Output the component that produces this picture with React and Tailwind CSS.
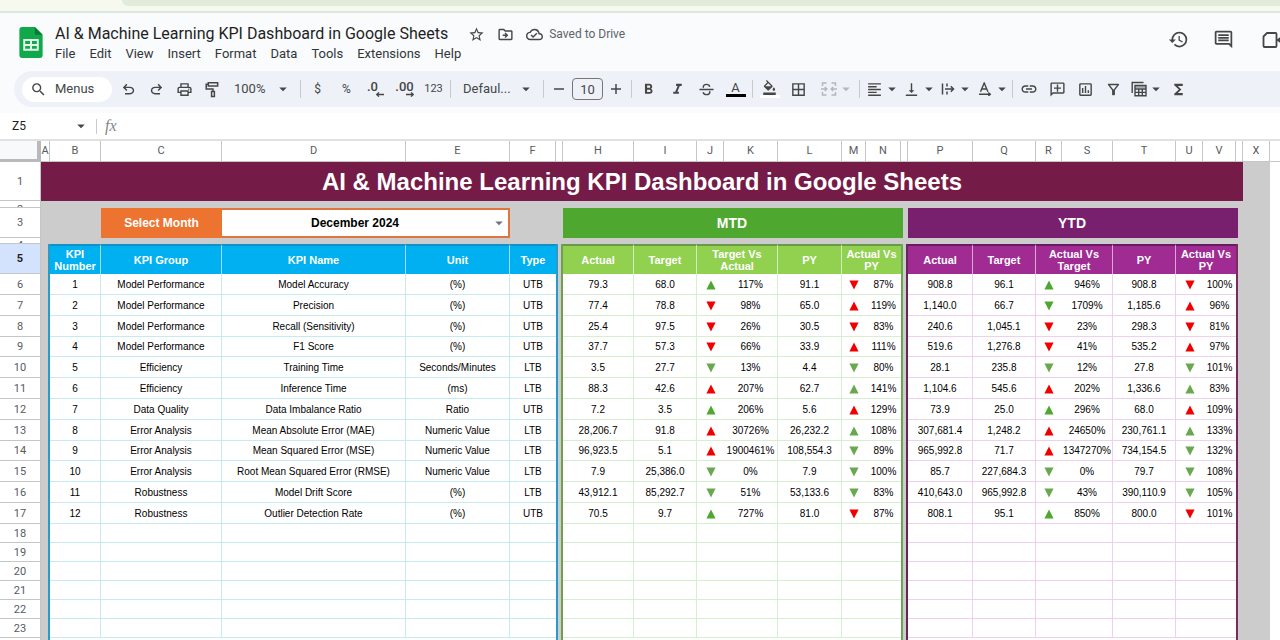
import React from "react";
import {
  MdStarBorder,
  MdOutlineDriveFileMove,
  MdOutlineCloudDone,
  MdHistory,
  MdOutlineComment,
  MdSearch,
  MdOutlinePrint,
  MdFormatBold,
  MdFormatItalic,
  MdFormatColorFill,
  MdBorderAll,
  MdFormatAlignLeft,
  MdVerticalAlignBottom,
  MdLink,
  MdOutlineAddComment,
  MdOutlineInsertChart,
  MdOutlineFilterAlt,
  MdFunctions,
  MdArrowDropDown,
} from "react-icons/md";

const MENUS = ["File", "Edit", "View", "Insert", "Format", "Data", "Tools", "Extensions", "Help"];

/* Column letters and widths of the sheet */
const COLUMNS = [
  ["A", "w-[9px]"],
  ["B", "w-[51px]"],
  ["C", "w-[121px]"],
  ["D", "w-[184px]"],
  ["E", "w-[104px]"],
  ["F", "w-[46px]"],
  ["G", "w-[7px]"],
  ["H", "w-[71px]"],
  ["I", "w-[63px]"],
  ["J", "w-[27px]"],
  ["K", "w-[54px]"],
  ["L", "w-[64px]"],
  ["M", "w-[24px]"],
  ["N", "w-[35px]"],
  ["O", "w-[7px]"],
  ["P", "w-[65px]"],
  ["Q", "w-[63px]"],
  ["R", "w-[26px]"],
  ["S", "w-[51px]"],
  ["T", "w-[63px]"],
  ["U", "w-[27px]"],
  ["V", "w-[33px]"],
  ["W", "w-[7px]"],
  ["X", "w-[27px]"],
];

const HIDDEN_LETTERS = ["G", "O", "W"];

/* Trend codes: u/d = direction, g = green, m = muted green, r = red */
const ROWS = [
  ["Model Performance", "Model Accuracy", "(%)", "UTB", ["79.3", "68.0", "ug", "117%", "91.1", "dr", "87%"], ["908.8", "96.1", "ug", "946%", "908.8", "dr", "100%"]],
  ["Model Performance", "Precision", "(%)", "UTB", ["77.4", "78.8", "dr", "98%", "65.0", "ur", "119%"], ["1,140.0", "66.7", "dg", "1709%", "1,185.6", "ur", "96%"]],
  ["Model Performance", "Recall (Sensitivity)", "(%)", "UTB", ["25.4", "97.5", "dr", "26%", "30.5", "dr", "83%"], ["240.6", "1,045.1", "dr", "23%", "298.3", "dr", "81%"]],
  ["Model Performance", "F1 Score", "(%)", "UTB", ["37.7", "57.3", "dr", "66%", "33.9", "ur", "111%"], ["519.6", "1,276.8", "dr", "41%", "535.2", "ur", "97%"]],
  ["Efficiency", "Training Time", "Seconds/Minutes", "LTB", ["3.5", "27.7", "dm", "13%", "4.4", "dm", "80%"], ["28.1", "235.8", "dm", "12%", "27.8", "dm", "101%"]],
  ["Efficiency", "Inference Time", "(ms)", "LTB", ["88.3", "42.6", "ur", "207%", "62.7", "um", "141%"], ["1,104.6", "545.6", "ur", "202%", "1,336.6", "um", "83%"]],
  ["Data Quality", "Data Imbalance Ratio", "Ratio", "UTB", ["7.2", "3.5", "ug", "206%", "5.6", "ur", "129%"], ["73.9", "25.0", "ug", "296%", "68.0", "ur", "109%"]],
  ["Error Analysis", "Mean Absolute Error (MAE)", "Numeric Value", "LTB", ["28,206.7", "91.8", "ur", "30726%", "26,232.2", "um", "108%"], ["307,681.4", "1,248.2", "ur", "24650%", "230,761.1", "um", "133%"]],
  ["Error Analysis", "Mean Squared Error (MSE)", "Numeric Value", "LTB", ["96,923.5", "5.1", "ur", "1900461%", "108,554.3", "dm", "89%"], ["965,992.8", "71.7", "ur", "1347270%", "734,154.5", "dm", "132%"]],
  ["Error Analysis", "Root Mean Squared Error (RMSE)", "Numeric Value", "LTB", ["7.9", "25,386.0", "dm", "0%", "7.9", "dm", "100%"], ["85.7", "227,684.3", "dm", "0%", "79.7", "dm", "108%"]],
  ["Robustness", "Model Drift Score", "(%)", "LTB", ["43,912.1", "85,292.7", "dm", "51%", "53,133.6", "dm", "83%"], ["410,643.0", "965,992.8", "dm", "43%", "390,110.9", "dm", "105%"]],
  ["Robustness", "Outlier Detection Rate", "(%)", "UTB", ["70.5", "9.7", "ug", "727%", "81.0", "dr", "87%"], ["808.1", "95.1", "ug", "850%", "800.0", "dr", "101%"]],
];

const EMPTY_ROWS = [18, 19, 20, 21, 22, 23];

const TREND_COLORS = { g: "fill-[#4ea72e]", m: "fill-[#6aa84f]", r: "fill-[#f00000]" };

function Trend({ code }) {
  const up = code[0] === "u";
  return (
    <svg viewBox="0 0 10 10" role="img" aria-label={up ? "Up" : "Down"} className={"mx-auto block size-[10px] " + TREND_COLORS[code[1]]}>
      <path d={up ? "M5 .5 9.600 9.500H.4Z" : "M.4.500h9.200L5 9.500Z"} />
    </svg>
  );
}

function Sep() {
  return <span className="mx-0.5 h-[18px] w-px shrink-0 bg-[#c7cacf]" />;
}

function Tool({ label, wide, children }) {
  return (
    <button type="button" aria-label={label} className={(wide ? "w-[29px]" : "w-7") + " flex h-7 shrink-0 items-center justify-center"}>
      {children}
    </button>
  );
}

function MenuTool({ label, muted, wide, children }) {
  return (
    <button
      type="button"
      aria-label={label}
      aria-haspopup="menu"
      className={(wide ? "w-[44px] pl-2 " : "w-[37px] pl-1 ") + (muted ? "text-[#b4b7bb] " : "") + "flex h-7 shrink-0 items-center"}
    >
      {children}
      <MdArrowDropDown className="size-[18px] shrink-0" />
    </button>
  );
}

function SheetsLogo() {
  return (
    <svg viewBox="0 0 24 32" className="h-[31px] w-[24px]" aria-hidden="true">
      <path d="M3 0h13l8 8v21a3 3 0 0 1-3 3H3a3 3 0 0 1-3-3V3a3 3 0 0 1 3-3Z" fill="#0fa84b" />
      <path d="m16 0 8 8h-8Z" fill="#0b7a36" />
      <path d="M4 12.500h16v12H4Zm2 2v3h5v-3Zm7 0v3h5v-3Zm-7 5v3h5v-3Zm7 0v3h5v-3Z" fill="#e6f5ea" fillRule="evenodd" />
    </svg>
  );
}

function UndoIcon({ flip }) {
  return (
    <svg viewBox="0 -960 960 960" fill="currentColor" className={"size-[17px] " + (flip ? "-scale-x-100" : "")}>
      <path d="M280-200v-80h284q63 0 109.500-40T720-420q0-60-46.500-100T564-560H312l104 104-56 56-200-200 200-200 56 56-104 104h252q97 0 166.500 63T800-420q0 94-69.500 157T564-200H280Z" />
    </svg>
  );
}

function PaintIcon() {
  return (
    <svg viewBox="0 0 16 18" className="h-[17px] w-[15px]" fill="none" stroke="currentColor" strokeWidth="1.6">
      <path d="M3.500 1.800h10v3.400h-10ZM3.500 3.500H1.300v5h7.200v2.500M7 11h3v5.500H7Z" />
    </svg>
  );
}

function DecimalIcon({ digits, right }) {
  return (
    <span className="flex flex-col items-end text-[13px] leading-[11px] font-medium">
      <span className={right ? "" : "mr-1.5"}>{digits}</span>
      <svg viewBox="0 0 8 5" className="h-[5px] w-[8px]" fill="none" stroke="currentColor" strokeWidth="1.3">
        <path d={right ? "M0 2.500h7M5 .4l2.200 2.100L5 4.600" : "M8 2.500H1M3 .4.800 2.500 3 4.600"} />
      </svg>
    </span>
  );
}

function StrikeIcon() {
  return (
    <svg viewBox="0 0 16 16" className="size-[15px]" fill="none" stroke="currentColor" strokeWidth="1.5">
      <path d="M.5 8h15M11.500 5C11 3.300 9.800 2.500 8 2.500c-2 0-3.400 1-3.400 2.500 0 .5.100.9.400 1.200M4.400 11c.5 1.700 1.800 2.500 3.600 2.500 2.200 0 3.500-1 3.500-2.600 0-.5-.1-.9-.3-1.200" />
    </svg>
  );
}

function MergeIcon() {
  return (
    <svg viewBox="0 0 16 14" className="h-[14px] w-[16px] shrink-0" fill="none" stroke="currentColor" strokeWidth="1.5">
      <path d="M5.500 1H1.500v3M5.500 13H1.500v-3M10.500 1h4v3M10.500 13h4v-3M0 7h5.500M16 7h-5.500M3.800 5l2 2-2 2M12.200 5l-2 2 2 2" />
    </svg>
  );
}

function WrapIcon() {
  return (
    <svg viewBox="0 0 14 14" className="mx-px size-[14px] shrink-0" fill="none" stroke="currentColor" strokeWidth="1.5">
      <path d="M1.500 1.500v11M6 1.500v3M6 9.500v3M4 7h8.500M9.800 4.300 12.500 7 9.800 9.700" />
    </svg>
  );
}

function RotateIcon() {
  return (
    <svg viewBox="0 0 14 14" className="mx-px size-[14px] shrink-0" fill="none" stroke="currentColor" strokeWidth="1.4">
      <path d="M2.500 9.800 6.200 1l3.700 8.800M3.800 7h4.800M1 12.200h11M10.300 10.400l2 1.800-2 1.800" />
    </svg>
  );
}

function TableViewsIcon() {
  return (
    <svg viewBox="0 0 16 16" className="size-[16px] shrink-0" fill="none" stroke="currentColor" strokeWidth="1.4">
      <path d="M1.200 12V1.500h11.300M4 4.500h11v10.300H4ZM4 8h11M4 11.400h11M7.700 8v6.800M11.300 8v6.800" />
      <path d="M4 4.500h11V7H4Z" fill="currentColor" stroke="none" opacity=".4" />
    </svg>
  );
}

function CallIcon() {
  return (
    <svg viewBox="0 0 24 18" className="h-[18px] w-[24px]" fill="none" stroke="currentColor" strokeWidth="1.8">
      <path d="M5 2h8.500a1 1 0 0 1 1 1v12a1 1 0 0 1-1 1h-11a1 1 0 0 1-1-1V5.500Z" strokeLinejoin="round" />
      <path d="m14 9 7-5v10Z" fill="currentColor" stroke="none" />
    </svg>
  );
}

function TitleBar() {
  return (
    <header className="flex h-[58px] items-start pt-3">
      <a href="#home" aria-label="Sheets home" className="mt-0.5 ml-[19px] shrink-0">
        <SheetsLogo />
      </a>
      <div className="ml-3 flex min-w-0 flex-1 flex-col">
        <div className="flex h-[18px] items-center">
          <h1 className="text-[16px] leading-[18px] whitespace-nowrap text-[#1f1f1f]">
            AI &amp; Machine Learning KPI Dashboard in Google Sheets
          </h1>
          <div className="ml-5 flex items-center gap-3 text-[#444746]">
            <button type="button" aria-label="Star">
              <MdStarBorder className="size-[17px]" />
            </button>
            <button type="button" aria-label="Move">
              <MdOutlineDriveFileMove className="size-[17px]" />
            </button>
            <span className="flex items-center gap-1.5 text-[12px] whitespace-nowrap text-[#5f6368]">
              <MdOutlineCloudDone className="size-[17px] text-[#444746]" />
              Saved to Drive
            </span>
          </div>
        </div>
        <nav className="mt-0.5 flex gap-3.5 text-[13px] leading-[18px] text-[#333638]">
          {MENUS.map((m) => (
            <button type="button" key={m}>
              {m}
            </button>
          ))}
        </nav>
      </div>
      <div className="flex shrink-0 items-center gap-6 pt-1 text-[#444746]">
        <button type="button" aria-label="Version history">
          <MdHistory className="size-[21px]" />
        </button>
        <button type="button" aria-label="Comments">
          <MdOutlineComment className="size-[21px]" />
        </button>
        <button type="button" aria-label="Join a call" className="ml-1 w-[18px] overflow-hidden">
          <CallIcon />
        </button>
      </div>
    </header>
  );
}

function Toolbar() {
  return (
    <div role="toolbar" aria-label="Main" className="ml-3.5 flex h-9 items-center overflow-hidden rounded-l-full bg-[#eef2f8] pl-2 text-[#444746]">
      <button type="button" className="mr-0.5 flex h-[25px] w-[90px] shrink-0 items-center gap-2 rounded-full bg-white pl-2 text-[13px]">
        <MdSearch className="size-[17px]" />
        Menus
      </button>
      <Tool label="Undo"><UndoIcon /></Tool>
      <Tool label="Redo"><UndoIcon flip /></Tool>
      <Tool label="Print"><MdOutlinePrint className="size-[17px]" /></Tool>
      <Tool label="Paint format"><PaintIcon /></Tool>
      <label className="grid w-[72px] shrink-0 items-center">
        <select aria-label="Zoom" className="col-start-1 row-start-1 h-7 appearance-none pl-2 text-[13px]">
          <option>100%</option>
        </select>
        <MdArrowDropDown className="pointer-events-none col-start-1 row-start-1 mr-1.5 size-[18px] justify-self-end" />
      </label>
      <Sep />
      <Tool wide label="Currency"><span className="text-[12px]">$</span></Tool>
      <Tool wide label="Percent"><span className="text-[12px]">%</span></Tool>
      <Tool wide label="Decrease decimals"><DecimalIcon digits=".0" /></Tool>
      <Tool wide label="Increase decimals"><DecimalIcon digits=".00" right /></Tool>
      <Tool wide label="More formats"><span className="text-[11px]">123</span></Tool>
      <Sep />
      <label className="grid w-[88px] shrink-0 items-center">
        <select aria-label="Font" className="col-start-1 row-start-1 h-7 appearance-none pl-2.5 text-[13px]">
          <option>Defaul...</option>
        </select>
        <MdArrowDropDown className="pointer-events-none col-start-1 row-start-1 mr-1.5 size-[18px] justify-self-end" />
      </label>
      <Sep />
      <button type="button" aria-label="Decrease font size" className="flex h-7 w-[26px] shrink-0 items-center justify-center">
        <svg viewBox="0 0 10 10" className="size-[10px]" stroke="currentColor" strokeWidth="1.5"><path d="M0 5h10" /></svg>
      </button>
      <input aria-label="Font size" defaultValue="10" className="h-[22px] w-[31px] shrink-0 rounded border border-[#747775] text-center text-[13px]" />
      <button type="button" aria-label="Increase font size" className="flex h-7 w-[26px] shrink-0 items-center justify-center">
        <svg viewBox="0 0 10 10" className="size-[10px]" stroke="currentColor" strokeWidth="1.5"><path d="M0 5h10M5 0v10" /></svg>
      </button>
      <Sep />
      <Tool wide label="Bold"><MdFormatBold className="size-[17px]" /></Tool>
      <Tool wide label="Italic"><MdFormatItalic className="size-[17px]" /></Tool>
      <Tool wide label="Strikethrough"><StrikeIcon /></Tool>
      <Tool wide label="Text color">
        <span className="flex w-[20px] flex-col items-center border-b-3 border-black text-[13px] leading-[13px]">A</span>
      </Tool>
      <Sep />
      <Tool wide label="Fill color">
        <span className="flex w-[20px] flex-col items-center border-b-3 border-white">
          <MdFormatColorFill className="size-[15px]" />
        </span>
      </Tool>
      <Tool wide label="Borders"><MdBorderAll className="size-[17px]" /></Tool>
      <MenuTool wide muted label="Merge cells"><MergeIcon /></MenuTool>
      <Sep />
      <MenuTool label="Horizontal align"><MdFormatAlignLeft className="size-[17px] shrink-0" /></MenuTool>
      <MenuTool label="Vertical align"><MdVerticalAlignBottom className="size-[17px] shrink-0" /></MenuTool>
      <MenuTool label="Text wrapping"><WrapIcon /></MenuTool>
      <MenuTool label="Text rotation"><RotateIcon /></MenuTool>
      <Sep />
      <Tool label="Insert link"><MdLink className="size-[18px]" /></Tool>
      <Tool label="Insert comment"><MdOutlineAddComment className="size-[17px] -scale-x-100" /></Tool>
      <Tool label="Insert chart"><MdOutlineInsertChart className="size-[17px]" /></Tool>
      <Tool label="Create a filter"><MdOutlineFilterAlt className="size-[17px]" /></Tool>
      <MenuTool label="Table views"><TableViewsIcon /></MenuTool>
      <Tool wide label="Functions"><MdFunctions className="size-[17px]" /></Tool>
    </div>
  );
}

function FormulaBar() {
  return (
    <div className="mt-1.5 flex h-[26px] items-center bg-white">
      <input aria-label="Name box" defaultValue="Z5" className="w-[72px] pl-3 text-[12px] text-[#1f1f1f]" />
      <MdArrowDropDown className="size-[18px] text-[#444746]" />
      <span className="ml-1.5 h-[15px] w-px bg-[#c7cacf]" />
      <span className="ml-2 font-['Liberation_Serif',serif] text-[16px] text-[#80868b] italic">fx</span>
      <input aria-label="Formula" className="ml-3 min-w-0 flex-1 text-[12px]" />
    </div>
  );
}

function RowHeader({ n, active }) {
  return (
    <th
      scope="row"
      className={
        "border-r border-b border-[#c4c7c5] p-0 text-center font-[Roboto,sans-serif] text-[11px] leading-none " +
        (active ? "bg-[#d3e3fd] font-bold text-[#1f1f1f]" : "bg-white font-normal text-[#575b5f]")
      }
    >
      {n}
    </th>
  );
}

function ThinRow({ n, height }) {
  return (
    <tr>
      <th scope="row" className="border-r border-b border-[#c4c7c5] bg-white p-0 text-center font-[Roboto,sans-serif] text-[11px] leading-[11px] font-normal text-[#575b5f]">
        <div className={height + " overflow-hidden"}>{n}</div>
      </th>
      <td colSpan={24} className="bg-[#cccccc] p-0" />
      <td className="p-0" />
    </tr>
  );
}

const HEAD = "border-t-2 p-0 pb-px text-center text-[11px] leading-[12px] font-bold text-white ";
const BLUE_HEAD = HEAD + "border-t-[#0f93c4] bg-[#00b0f0] ";
const GREEN_HEAD = HEAD + "border-t-[#6a9a45] bg-[#92d050] ";
const PURPLE_HEAD = HEAD + "border-t-[#6a1a60] bg-[#a02b93] ";

const CELL = "border-b p-0 pt-px text-center text-[10px] leading-[12px] whitespace-nowrap text-black ";
const BLUE = CELL + "border-[#c3ebf1] ";
const GREEN = CELL + "border-[#d5efcf] ";
const PURPLE = CELL + "border-[#efd0ee] ";

/* Narrow grey columns carry the thick outlines of the blocks beside them */
const GAP_A = "border-r-2 border-r-[#2a9bc6] bg-[#cccccc] p-0";
const GAP_G = "border-x-2 border-l-[#2a9bc6] border-r-[#6f9f4f] bg-[#cccccc] p-0";
const GAP_O = "border-x-2 border-l-[#6aa84f] border-r-[#6b2457] bg-[#cccccc] p-0";
const GAP_W = "border-l-2 border-l-[#7a2a5e] bg-[#cccccc] p-0";

function MetricCells({ values, tone }) {
  return [0, 1, 2, 3, 4, 5, 6].map((i) => {
    const trend = i === 2 || i === 5;
    return (
      <td key={i} className={tone + (trend || i === 6 ? "" : "border-r")}>
        {values && (trend ? <Trend code={values[i]} /> : values[i])}
      </td>
    );
  });
}

function BodyRow({ n, row, index }) {
  const height = row ? (index === 3 || index === 8 ? "h-[20px]" : "h-[21px]") : "h-[19px]";
  return (
    <tr className={height}>
      <RowHeader n={n} />
      <td className={GAP_A} />
      <td className={BLUE + "border-r"}>{row && index + 1}</td>
      <td className={BLUE + "border-r"}>{row && row[0]}</td>
      <td className={BLUE + "border-r"}>{row && row[1]}</td>
      <td className={BLUE + "border-r"}>{row && row[2]}</td>
      <td className={BLUE}>{row && row[3]}</td>
      <td className={GAP_G} />
      <MetricCells values={row && row[4]} tone={GREEN} />
      <td className={GAP_O} />
      <MetricCells values={row && row[5]} tone={PURPLE} />
      <td colSpan={2} className={GAP_W} />
      <td className="p-0" />
    </tr>
  );
}

/* Unnumbered strip that carries the block outlines on below the last row */
function TailRow() {
  return (
    <tr className="h-[19px]">
      <td className="border-r border-[#c4c7c5] p-0" />
      <td className={GAP_A} />
      <td colSpan={5} className="p-0" />
      <td className={GAP_G} />
      <td colSpan={7} className="p-0" />
      <td className={GAP_O} />
      <td colSpan={7} className="p-0" />
      <td colSpan={2} className={GAP_W} />
      <td className="p-0" />
    </tr>
  );
}

function Sheet() {
  return (
    <div className="min-h-0 flex-1 overflow-hidden border-t-2 border-[#dfe1e3] bg-white">
      <table className="w-full table-fixed border-separate border-spacing-0 font-['Liberation_Sans',Arial,sans-serif]">
        <colgroup>
          <col className="w-[41px]" />
          {COLUMNS.map(([letter, width]) => (
            <col key={letter} className={width} />
          ))}
          <col />
        </colgroup>
        <thead>
          <tr className="h-[21px]">
            <td className="border-r-4 border-b-3 border-[#b7b9bb] bg-[#f8f9fa] p-0" />
            {COLUMNS.map(([letter]) => (
              <th key={letter} scope="col" className="overflow-hidden border-r border-b border-[#c4c7c5] p-0 pb-px text-center font-[Roboto,sans-serif] text-[11px] leading-none font-normal text-[#575b5f]">
                {HIDDEN_LETTERS.includes(letter) ? null : letter}
              </th>
            ))}
            <td className="border-b border-[#c4c7c5] p-0" />
          </tr>
        </thead>
        <tbody>
          <tr className="h-[39px]">
            <RowHeader n={1} />
            <td colSpan={23} className="bg-[#741b47] p-0 pt-px text-center text-[24px] leading-[30px] font-bold text-white">
              AI &amp; Machine Learning KPI Dashboard in Google Sheets
            </td>
            <td className="bg-[#cccccc] p-0" />
            <td className="p-0" />
          </tr>
          <ThinRow n={2} height="h-[6px] pt-[3px]" />
          <tr className="h-[30px]">
            <RowHeader n={3} />
            <td colSpan={2} className="bg-[#cccccc] p-0" />
            <td className="bg-[#ed7331] p-0 text-center text-[12px] font-bold text-white">
              <label htmlFor="month">Select Month</label>
            </td>
            <td colSpan={2} className="border-2 border-l-0 border-[#e0763f] bg-white p-0">
              <div className="grid items-center">
                <select id="month" className="col-start-1 row-start-1 h-[26px] appearance-none pr-5 text-center text-[12px] font-bold text-black [text-align-last:center]">
                  <option>December 2024</option>
                </select>
                <MdArrowDropDown className="pointer-events-none col-start-1 row-start-1 size-[18px] justify-self-end text-[#6f7377]" />
              </div>
            </td>
            <td className="bg-[#cccccc] p-0" />
            <td className="bg-[#cccccc] p-0" />
            <th scope="colgroup" colSpan={7} className="bg-[#4ea72e] p-0 text-center text-[14px] font-bold text-white">MTD</th>
            <td className="border-l-2 border-l-[#4ea72e] bg-[#cccccc] p-0" />
            <th scope="colgroup" colSpan={7} className="bg-[#78206e] p-0 text-center text-[14px] font-bold text-white">YTD</th>
            <td colSpan={2} className="border-l-2 border-l-[#78206e] bg-[#cccccc] p-0" />
            <td className="p-0" />
          </tr>
          <ThinRow n={4} height="h-[5px] pt-[2px]" />
          <tr className="h-[30px]">
            <RowHeader n={5} active />
            <td className={GAP_A} />
            <th scope="col" className={BLUE_HEAD + "border-r border-r-[#9fe0f7]"}>KPI<br />Number</th>
            <th scope="col" className={BLUE_HEAD + "border-r border-r-[#9fe0f7]"}>KPI Group</th>
            <th scope="col" className={BLUE_HEAD + "border-r border-r-[#9fe0f7]"}>KPI Name</th>
            <th scope="col" className={BLUE_HEAD + "border-r border-r-[#9fe0f7]"}>Unit</th>
            <th scope="col" className={BLUE_HEAD}>Type</th>
            <td className={GAP_G} />
            <th scope="col" className={GREEN_HEAD + "border-r border-r-[#d3edb8]"}>Actual</th>
            <th scope="col" className={GREEN_HEAD + "border-r border-r-[#d3edb8]"}>Target</th>
            <th scope="col" colSpan={2} className={GREEN_HEAD + "border-r border-r-[#d3edb8]"}>Target Vs<br />Actual</th>
            <th scope="col" className={GREEN_HEAD + "border-r border-r-[#d3edb8]"}>PY</th>
            <th scope="col" colSpan={2} className={GREEN_HEAD}>Actual Vs<br />PY</th>
            <td className={GAP_O} />
            <th scope="col" className={PURPLE_HEAD + "border-r border-r-[#dda6d8]"}>Actual</th>
            <th scope="col" className={PURPLE_HEAD + "border-r border-r-[#dda6d8]"}>Target</th>
            <th scope="col" colSpan={2} className={PURPLE_HEAD + "border-r border-r-[#dda6d8]"}>Actual Vs<br />Target</th>
            <th scope="col" className={PURPLE_HEAD + "border-r border-r-[#dda6d8]"}>PY</th>
            <th scope="col" colSpan={2} className={PURPLE_HEAD}>Actual Vs<br />PY</th>
            <td colSpan={2} className={GAP_W} />
            <td className="p-0" />
          </tr>
          {ROWS.map((row, i) => (
            <BodyRow key={row[1]} n={i + 6} row={row} index={i} />
          ))}
          {EMPTY_ROWS.map((n) => (
            <BodyRow key={n} n={n} />
          ))}
          <TailRow />
        </tbody>
      </table>
    </div>
  );
}

export default function App() {
  return (
    <div className="flex h-screen flex-col overflow-hidden bg-[#f9fbfd] font-[Roboto,sans-serif]">
      <div className="h-[13px] shrink-0 border-b-2 border-[#dde8da] bg-[#f6faee]">
        <div className="ml-[122px] h-[6px] rounded-bl-[16px] bg-[#e0ebdc]" />
      </div>
      <TitleBar />
      <Toolbar />
      <FormulaBar />
      <Sheet />
    </div>
  );
}
